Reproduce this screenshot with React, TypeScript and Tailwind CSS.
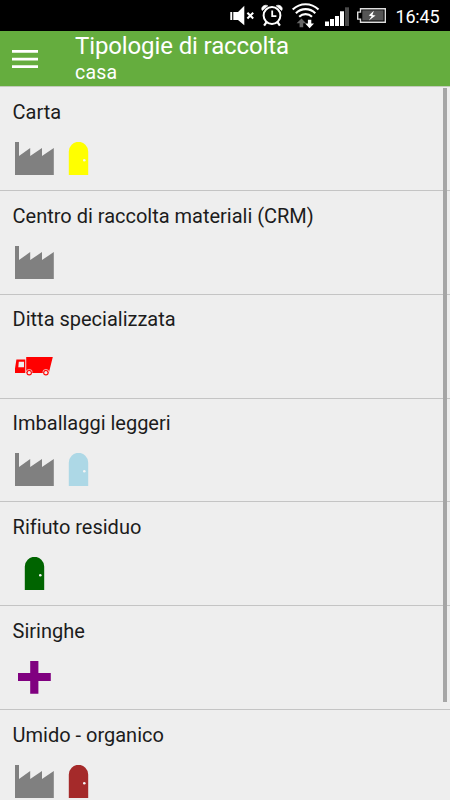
import React from 'react';

type IconType = 'factory' | 'door' | 'truck' | 'cross';

interface RowIcon {
  type: IconType;
  color: string;
}

interface Row {
  title: string;
  icons: RowIcon[];
}

const rows: Row[] = [
  { title: 'Carta', icons: [{ type: 'factory', color: '#808080' }, { type: 'door', color: '#ffff00' }] },
  { title: 'Centro di raccolta materiali (CRM)', icons: [{ type: 'factory', color: '#808080' }] },
  { title: 'Ditta specializzata', icons: [{ type: 'truck', color: '#ff0000' }] },
  { title: 'Imballaggi leggeri', icons: [{ type: 'factory', color: '#808080' }, { type: 'door', color: '#add8e6' }] },
  { title: 'Rifiuto residuo', icons: [{ type: 'door', color: '#006400' }] },
  { title: 'Siringhe', icons: [{ type: 'cross', color: '#800080' }] },
  { title: 'Umido - organico', icons: [{ type: 'factory', color: '#808080' }, { type: 'door', color: '#a52a2a' }] },
];

const CollectionIcon: React.FC<RowIcon> = ({ type, color }) => {
  return (
    <svg width="44" height="34" viewBox="0 0 44 34" className="shrink-0">
      {type === 'factory' && (
        <path d="M2 0h4v14L17.2 6.1V14L29 6.1V14L40.8 6.1V33H2z" fill={color} />
      )}
      {type === 'door' && (
        <>
          <path d="M11.8 33V9.5a9.7 9.7 0 0 1 19.4 0V33z" fill={color} />
          <circle cx="27.3" cy="18.3" r="1.3" fill="#f4f4f4" />
        </>
      )}
      {type === 'truck' && (
        <>
          <path d="M3.4 10.6h8.9v13.5H2v-4.6z M13.2 8h26.6l-4 16.1H13.2z" fill={color} />
          <path d="M5.8 12.8h5.2v5.4H5.3z" fill="#eeeeee" />
          <circle cx="16.2" cy="23.7" r="2.2" fill="#eeeeee" stroke={color} strokeWidth="1.1" />
          <circle cx="32.9" cy="23.7" r="2.2" fill="#eeeeee" stroke={color} strokeWidth="1.1" />
          <path d="M13.1 23.5a3.1 3.1 0 0 1 6.2 0M29.8 23.5a3.1 3.1 0 0 1 6.2 0" fill="none" stroke="#eeeeee" strokeWidth="0.7" />
        </>
      )}
      {type === 'cross' && (
        <path d="M17.2 0h8.2v12h12.4v8.1H25.4v12.7h-8.2V20.1H5V12h12.2z" fill={color} />
      )}
    </svg>
  );
};

const StatusBar: React.FC<{}> = () => {
  return (
    <div className="flex h-[31px] shrink-0 bg-black pl-[229px] text-white">
      {/* Muted speaker */}
      <svg width="26" height="31" viewBox="229 0 26 31" fill="none">
        <path d="M230.3 12h1.9v8h-1.9zM233.3 12h4.7l6.3-6.3v19.6L238 20h-4.7z" fill="#fff" />
        <path d="M247.4 12.7l5.8 5.8M253.2 12.7l-5.8 5.8" stroke="#fff" strokeWidth="2" />
      </svg>
      {/* Alarm */}
      <svg width="32" height="31" viewBox="255 0 32 31" fill="none" stroke="#fff">
        <circle cx="272" cy="15.5" r="8.4" strokeWidth="2" />
        <path d="M272.2 10.5v5.6h4.2" strokeWidth="1.8" />
        <path d="M266.5 22.2l-2.4 3.4M277.5 22.2l2.4 3.4" strokeWidth="2.2" />
        <path d="M262.3 10.5c-2-3 2-6.6 5.5-4.7zM281.7 10.5c2-3-2-6.6-5.5-4.7z" fill="#fff" strokeWidth="0.7" />
      </svg>
      {/* Wifi */}
      <svg width="34" height="31" viewBox="287 0 34 31" fill="none">
        <g stroke="#fff" strokeWidth="2.1">
          <path d="M292.7 9.6c7.4-7.1 18.4-7.1 25.8 0" />
          <path d="M295.9 13.2c5.6-5.4 13.8-5.4 19.4 0" />
          <path d="M299.2 16.7c3.6-3.4 9.2-3.4 12.8 0" />
        </g>
        <path d="M301.5 18.6l4.6 4.7h-2.9v4h-3.6v-4h-3z" fill="#666" />
        <path d="M309.6 28.2l4.4-4.7h-2.7v-3.7h-3.4v3.7h-2.7z" fill="#fff" />
      </svg>
      {/* Signal */}
      <svg width="32" height="31" viewBox="321 0 32 31" fill="#fff">
        <path d="M325 21.5h4V26h-4zM330 19h4v7h-4zM335 16h4v10h-4zM340 11.3h4V26h-4z" />
        <path d="M345 7.3h4V26h-4z" fill="#4a4a4a" />
      </svg>
      {/* Battery */}
      <svg width="36" height="31" viewBox="353 0 36 31" fill="none">
        <path d="M360.5 8.7h24.8v13.6h-24.8v-3.2h-2.8v-7h2.8z" stroke="#ddd" strokeWidth="1.4" />
        <path d="M362.3 10.3h21.2v10.2h-21.2z" fill="#555" />
        <path d="M373.9 10.8l-5.2 4.8 2.9.7-2.7 4.2 6.7-4.9-3.2-.7z" fill="#fff" />
      </svg>
      <span className="ml-[6.5px] mt-[3px] text-[18px] leading-7 tracking-[-0.2px]">16:45</span>
    </div>
  );
};

const Header: React.FC<{}> = () => {
  return (
    <header className="flex h-14 shrink-0 border-b border-[#c3cbbc] bg-[#65ad3e] text-white">
      <button className="flex w-[75px] items-start pl-3 pt-[19px]" aria-label="Menu">
        <svg width="26" height="19" viewBox="0 0 26 19" fill="#fff">
          <path d="M0 0h26v2.7H0zM0 7.7h26v2.7H0zM0 15.3h26V18H0z" />
        </svg>
      </button>
      <div>
        <h1 className="pt-[2px] text-2xl leading-[26px] tracking-[-0.12px]">Tipologie di raccolta</h1>
        <p className="pt-px text-[19.5px] leading-[26px] tracking-[0.2px]">casa</p>
      </div>
    </header>
  );
};

export default function App() {
  return (
    <div className="relative flex h-[800px] w-[450px] flex-col overflow-hidden bg-[#eeeeee] font-['Roboto',sans-serif]">
      <StatusBar />
      <Header />
      <main className="pt-[0.2px]">
        {rows.map((row) => (
          <div key={row.title} className="h-[103.8px] border-b border-[#c4c4c4] pl-[13px]">
            <h2 className="-ml-[0.4px] pt-[10.6px] text-xl leading-7 tracking-[-0.01px] text-[#1c1c1c]">{row.title}</h2>
            <div className="flex pt-4">
              {row.icons.map((icon) => (
                <CollectionIcon key={icon.type} type={icon.type} color={icon.color} />
              ))}
            </div>
          </div>
        ))}
      </main>
      {/* Scroll indicator */}
      <div className="absolute right-[3px] top-[88px] h-[614px] w-1 bg-[#a6a6a6]" />
    </div>
  );
}
